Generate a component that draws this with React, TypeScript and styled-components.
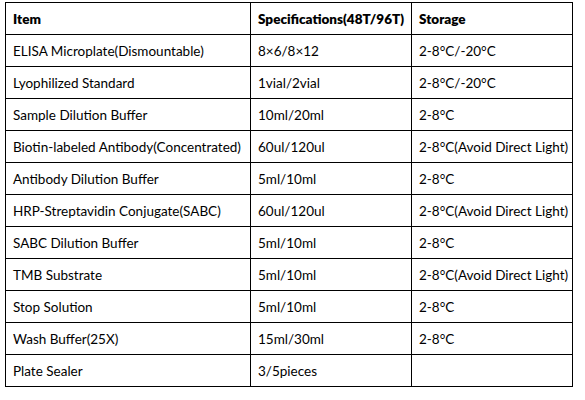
import React from 'react';
import styled, { createGlobalStyle } from 'styled-components';

type Row = {
  item: string;
  spec: string;
  storage: string;
};

const rows: Row[] = [
  { item: 'ELISA Microplate(Dismountable)', spec: '8×6/8×12', storage: '2-8°C/-20°C' },
  { item: 'Lyophilized Standard', spec: '1vial/2vial', storage: '2-8°C/-20°C' },
  { item: 'Sample Dilution Buffer', spec: '10ml/20ml', storage: '2-8°C' },
  { item: 'Biotin-labeled Antibody(Concentrated)', spec: '60ul/120ul', storage: '2-8°C(Avoid Direct Light)' },
  { item: 'Antibody Dilution Buffer', spec: '5ml/10ml', storage: '2-8°C' },
  { item: 'HRP-Streptavidin Conjugate(SABC)', spec: '60ul/120ul', storage: '2-8°C(Avoid Direct Light)' },
  { item: 'SABC Dilution Buffer', spec: '5ml/10ml', storage: '2-8°C' },
  { item: 'TMB Substrate', spec: '5ml/10ml', storage: '2-8°C(Avoid Direct Light)' },
  { item: 'Stop Solution', spec: '5ml/10ml', storage: '2-8°C' },
  { item: 'Wash Buffer(25X)', spec: '15ml/30ml', storage: '2-8°C' },
  { item: 'Plate Sealer', spec: '3/5pieces', storage: '' },
];

const GlobalStyle = createGlobalStyle`
  body {
    margin: 0;
    background: #fff;
    font-family: Lato, "Liberation Sans", sans-serif;
    color: #000;
  }
`;

export default function App() {
  return (
    <>
      <GlobalStyle />
      <Page>
        <Table>
          <colgroup>
            <col style={{ width: 245 }} />
            <col style={{ width: 161 }} />
            <col style={{ width: 161 }} />
          </colgroup>
          <thead>
            <tr>
              <HeadCell>Item</HeadCell>
              <HeadCell>Specifications(48T/96T)</HeadCell>
              <HeadCell>Storage</HeadCell>
            </tr>
          </thead>
          <tbody>
            {rows.map((r) => (
              <tr key={r.item}>
                <Cell>{r.item}</Cell>
                <Cell>{r.spec}</Cell>
                <Cell>{r.storage}</Cell>
              </tr>
            ))}
          </tbody>
        </Table>
      </Page>
    </>
  );
}

const Page = styled.div`
  padding: 2px 0 0 5px;
`;

const Table = styled.table`
  border-collapse: collapse;
  table-layout: fixed;
  width: 568px;
`;

const Cell = styled.td`
  height: 31px;
  padding: 0 7px;
  border: 1px solid #000;
  font-size: 13.5px;
  white-space: nowrap;
  vertical-align: middle;
`;

const HeadCell = styled(Cell).attrs({ as: 'th' })`
  font-weight: 800;
  text-align: left;
`;
